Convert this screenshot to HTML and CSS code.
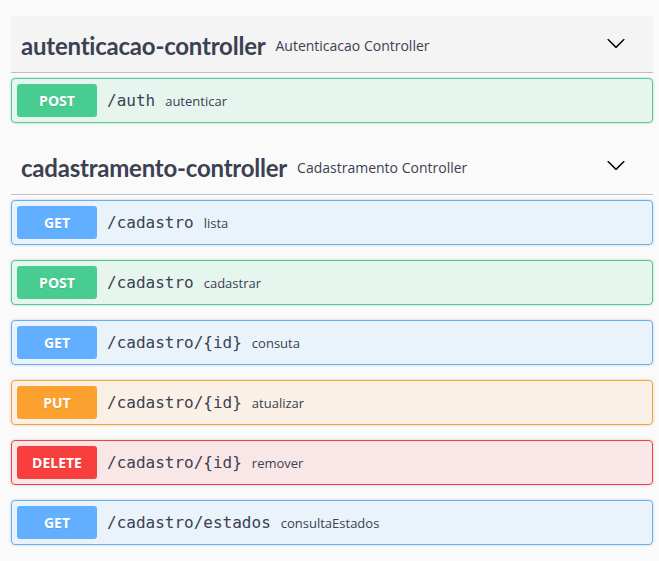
FILE: index.html
```html
<!DOCTYPE html>
<html lang="pt">
<head>
<meta charset="utf-8">
<title>Swagger</title>
<link rel="stylesheet" href="styles.css">
</head>
<body>
<div class="wrapper">
  <section class="tag-section">
    <h4 class="tag tag-hover">
      <span class="tag-name">autenticacao-controller</span>
      <small class="tag-desc">Autenticacao Controller</small>
      <svg class="arrow" width="20" height="20" viewBox="0 0 20 20"><path d="M17.418 6.109c.272-.268.709-.268.979 0s.271.701 0 .969l-7.908 7.83c-.27.268-.707.268-.979 0l-7.908-7.83c-.27-.268-.27-.701 0-.969.271-.268.709-.268.979 0L10 13.25l7.418-7.141z"/></svg>
    </h4>
    <div class="opblock post"><div class="summary"><span class="method">POST</span><span class="path">/auth</span><span class="desc">autenticar</span></div></div>
  </section>
  <section class="tag-section">
    <h4 class="tag">
      <span class="tag-name">cadastramento-controller</span>
      <small class="tag-desc">Cadastramento Controller</small>
      <svg class="arrow" width="20" height="20" viewBox="0 0 20 20"><path d="M17.418 6.109c.272-.268.709-.268.979 0s.271.701 0 .969l-7.908 7.83c-.27.268-.707.268-.979 0l-7.908-7.83c-.27-.268-.27-.701 0-.969.271-.268.709-.268.979 0L10 13.25l7.418-7.141z"/></svg>
    </h4>
    <div class="opblock get"><div class="summary"><span class="method">GET</span><span class="path">/cadastro</span><span class="desc">lista</span></div></div>
    <div class="opblock post"><div class="summary"><span class="method">POST</span><span class="path">/cadastro</span><span class="desc">cadastrar</span></div></div>
    <div class="opblock get"><div class="summary"><span class="method">GET</span><span class="path">/cadastro/{id}</span><span class="desc">consuta</span></div></div>
    <div class="opblock put"><div class="summary"><span class="method">PUT</span><span class="path">/cadastro/{id}</span><span class="desc">atualizar</span></div></div>
    <div class="opblock delete"><div class="summary"><span class="method">DELETE</span><span class="path">/cadastro/{id}</span><span class="desc">remover</span></div></div>
    <div class="opblock get"><div class="summary"><span class="method">GET</span><span class="path">/cadastro/estados</span><span class="desc">consultaEstados</span></div></div>
  </section>
</div>
</body>
</html>
```

FILE: styles.css
```css
html, body {
  margin: 0;
  padding: 0;
  background: #fafafa;
}
.wrapper {
  padding: 16px 6px 0 11px;
}
.tag {
  display: flex;
  align-items: center;
  margin: 0 0 5px;
  height: 56px;
  padding: 0 27px 0 10px;
  border-bottom: 1px solid rgba(59, 65, 81, 0.3);
  color: #3b4151;
}
.tag-hover {
  background: #f4f4f4;
}
.tag-name {
  font-family: "Lato", sans-serif;
  font-weight: 700;
  font-size: 24px;
  letter-spacing: -0.22px;
  position: relative;
  top: 1px;
}
.tag-desc {
  flex: 1;
  padding: 0 10px;
  font-family: "Open Sans", sans-serif;
  font-size: 14px;
  font-weight: 400;
  position: relative;
  top: 1px;
}
.arrow {
  fill: #000;
  margin-top: -3px;
}
.opblock {
  margin: 0 0 15px;
  border: 1px solid #000;
  border-radius: 4px;
  box-shadow: 0 0 3px rgba(0, 0, 0, 0.19);
}
.summary {
  display: flex;
  align-items: center;
  padding: 5px;
}
.method {
  min-width: 80px;
  box-sizing: border-box;
  height: 33px;
  line-height: 33px;
  padding: 0 15px;
  text-align: center;
  border-radius: 3px;
  font-family: "Open Sans", sans-serif;
  font-size: 14px;
  font-weight: 700;
  color: #fff;
  text-shadow: 0 1px 0 rgba(0, 0, 0, 0.1);
}
.path {
  padding: 0 10px;
  font-family: "DejaVu Sans Mono", monospace;
  font-size: 16px;
  font-weight: 400;
  color: #3b4151;
}
.desc {
  flex: 1;
  font-family: "Open Sans", sans-serif;
  font-size: 13px;
  color: #3b4151;
}
.post { border-color: #49cc90; background: rgba(73, 204, 144, 0.1); }
.post .method { background: #49cc90; }
.get { border-color: #61affe; background: rgba(97, 175, 254, 0.1); }
.get .method { background: #61affe; }
.put { border-color: #fca130; background: rgba(252, 161, 48, 0.1); }
.put .method { background: #fca130; }
.delete { border-color: #f93e3e; background: rgba(249, 62, 62, 0.1); }
.delete .method { background: #f93e3e; }
```
